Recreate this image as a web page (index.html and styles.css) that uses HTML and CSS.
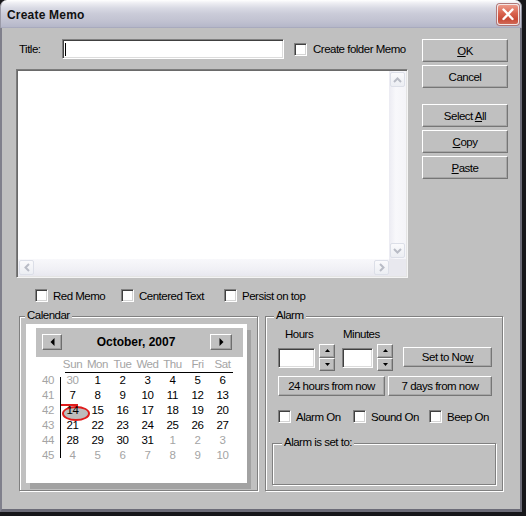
FILE: index.html
```html
<!DOCTYPE html>
<html lang="en">
<head>
    <meta charset="UTF-8">
    <title>Create Memo</title>
    <link rel="stylesheet" href="styles.css">
</head>
<body>
    <div class="window">
        <div class="titlebar">
            <span class="caption">Create Memo</span>
            <div class="close">
                <svg width="20" height="19" viewBox="0 0 20 19"><path d="M5.5 4.5 L14.5 14 M14.5 4.5 L5.5 14" stroke="#fff" stroke-width="2.4" stroke-linecap="round"/></svg>
            </div>
        </div>

        <div class="client">
            <div class="top">
                <div class="left">
                    <div class="title-row">
                        <span class="title-label">Title:</span>
                        <div class="field title-field"><span class="caret"></span></div>
                        <div class="check folder-check"><span class="box"></span>Create folder Memo</div>
                    </div>

                    <div class="memo">
                        <div class="memo-text"></div>
                        <div class="vscroll">
                            <div class="sb-btn"><svg width="9" height="6" viewBox="0 0 9 6"><path d="M1 5 L4.5 1.5 L8 5" fill="none" stroke="#b9bcc6" stroke-width="2"/></svg></div>
                            <div class="sb-btn"><svg width="9" height="6" viewBox="0 0 9 6"><path d="M1 1 L4.5 4.5 L8 1" fill="none" stroke="#b9bcc6" stroke-width="2"/></svg></div>
                        </div>
                        <div class="hscroll">
                            <div class="sb-btn"><svg width="6" height="9" viewBox="0 0 6 9"><path d="M5 1 L1.5 4.5 L5 8" fill="none" stroke="#b9bcc6" stroke-width="2"/></svg></div>
                            <div class="sb-btn"><svg width="6" height="9" viewBox="0 0 6 9"><path d="M1 1 L4.5 4.5 L1 8" fill="none" stroke="#b9bcc6" stroke-width="2"/></svg></div>
                        </div>
                        <div class="corner"></div>
                    </div>
                </div>

                <div class="buttons">
                    <div class="btn"><span><u>O</u>K</span></div>
                    <div class="btn"><span>Cancel</span></div>
                    <div class="btn spaced"><span>Select <u>A</u>ll</span></div>
                    <div class="btn"><span><u>C</u>opy</span></div>
                    <div class="btn"><span><u>P</u>aste</span></div>
                </div>
            </div>

            <div class="options">
                <div class="check"><span class="box"></span>Red Memo</div>
                <div class="check"><span class="box"></span>Centered Text</div>
                <div class="check"><span class="box"></span>Persist on top</div>
            </div>

            <div class="groups">
                <div class="group calendar-group">
                    <span class="group-label">Calendar</span>
                    <div class="calendar">
                        <div class="cal-head">
                            <div class="nav"><svg width="5" height="8" viewBox="0 0 5 8"><path d="M4.5 0 L0.5 4 L4.5 8 Z" fill="#000"/></svg></div>
                            <span class="month">October, 2007</span>
                            <div class="nav nav-next"><svg width="5" height="8" viewBox="0 0 5 8"><path d="M0.5 0 L4.5 4 L0.5 8 Z" fill="#000"/></svg></div>
                        </div>
                        <div class="cal-grid">
                            <span></span>
                            <span class="dname">Sun</span><span class="dname">Mon</span><span class="dname">Tue</span><span class="dname">Wed</span><span class="dname">Thu</span><span class="dname">Fri</span><span class="dname">Sat</span>
                            <span class="rule"></span>

                            <span class="wk">40</span>
                            <span class="day other">30</span><span class="day">1</span><span class="day">2</span><span class="day">3</span><span class="day">4</span><span class="day">5</span><span class="day">6</span>
                            <span class="wk">41</span>
                            <span class="day">7</span><span class="day">8</span><span class="day">9</span><span class="day">10</span><span class="day">11</span><span class="day">12</span><span class="day">13</span>
                            <span class="wk">42</span>
                            <span class="day sel">14</span><span class="day">15</span><span class="day">16</span><span class="day">17</span><span class="day">18</span><span class="day">19</span><span class="day">20</span>
                            <span class="wk">43</span>
                            <span class="day">21</span><span class="day">22</span><span class="day">23</span><span class="day">24</span><span class="day">25</span><span class="day">26</span><span class="day">27</span>
                            <span class="wk">44</span>
                            <span class="day">28</span><span class="day">29</span><span class="day">30</span><span class="day">31</span><span class="day other">1</span><span class="day other">2</span><span class="day other">3</span>
                            <span class="wk">45</span>
                            <span class="day other">4</span><span class="day other">5</span><span class="day other">6</span><span class="day other">7</span><span class="day other">8</span><span class="day other">9</span><span class="day other">10</span>
                        </div>
                    </div>
                </div>

                <div class="group alarm-group">
                    <span class="group-label">Alarm</span>
                    <div class="alarm-top">
                        <div class="spin-field hours">
                            <span class="spin-label">Hours</span>
                            <div class="spin-row">
                                <div class="field num"></div>
                                <div class="spinner">
                                    <div class="spin-btn"><svg width="5" height="3" viewBox="0 0 5 3"><path d="M0 3 L2.5 0 L5 3 Z" fill="#000"/></svg></div>
                                    <div class="spin-btn"><svg width="5" height="3" viewBox="0 0 5 3"><path d="M0 0 L2.5 3 L5 0 Z" fill="#000"/></svg></div>
                                </div>
                            </div>
                        </div>
                        <div class="spin-field minutes">
                            <span class="spin-label">Minutes</span>
                            <div class="spin-row">
                                <div class="field num"></div>
                                <div class="spinner">
                                    <div class="spin-btn"><svg width="5" height="3" viewBox="0 0 5 3"><path d="M0 3 L2.5 0 L5 3 Z" fill="#000"/></svg></div>
                                    <div class="spin-btn"><svg width="5" height="3" viewBox="0 0 5 3"><path d="M0 0 L2.5 3 L5 0 Z" fill="#000"/></svg></div>
                                </div>
                            </div>
                        </div>
                        <div class="btn small now-btn"><span>Set to No<u>w</u></span></div>
                    </div>
                    <div class="alarm-quick">
                        <div class="btn small day-btn"><span>24 hours from now</span></div>
                        <div class="btn small week-btn"><span>7 days from now</span></div>
                    </div>
                    <div class="alarm-checks">
                        <div class="check"><span class="box"></span>Alarm On</div>
                        <div class="check"><span class="box"></span>Sound On</div>
                        <div class="check"><span class="box"></span>Beep On</div>
                    </div>
                    <div class="group alarm-status">
                        <span class="group-label">Alarm is set to:</span>
                    </div>
                </div>
            </div>
        </div>
    </div>
</body>
</html>
```

FILE: styles.css
```css
* {
    margin: 0;
    padding: 0;
    box-sizing: border-box;
}

html, body {
    background: #17171a;
}

body {
    width: 526px;
    height: 516px;
    overflow: hidden;
    font-family: 'Liberation Sans', Arial, sans-serif;
    font-size: 11.5px;
    letter-spacing: -0.5px;
    color: #000;
}

.window {
    width: 522px;
    height: 512px;
    display: flex;
    flex-direction: column;
    background: #c0c0c0;
    border-radius: 7px 7px 0 0;
    overflow: hidden;
}

/* title bar */
.titlebar {
    height: 28px;
    flex: none;
    display: flex;
    align-items: center;
    justify-content: space-between;
    padding: 0 2px 0 6px;
    background: linear-gradient(#ffffff 0px, #eeeef3 3px, #d9dae4 8px, #cacbd8 14px, #c1c2d1 21px, #b5b7c9 27px, #9c9eb2 28px);
    border-radius: 7px 7px 0 0;
    border-left: 1px solid #9a9aa8;
    border-right: 1px solid #8a8a98;
}

.caption {
    font-size: 12px;
    font-weight: bold;
    letter-spacing: 0.2px;
    color: #111;
    margin-top: 1px;
}

.close {
    width: 22px;
    height: 21px;
    display: flex;
    align-items: center;
    justify-content: center;
    margin-top: 1px;
    border: 1px solid #f4e8e8;
    border-radius: 3px;
    background: linear-gradient(#ec9a8a, #d8624e 45%, #c84a38 75%, #d06a58);
    box-shadow: 0 0 0 1px #b07878;
}

/* client area */
.client {
    flex: 1;
    border-left: 2px solid #80808c;
    border-right: 2px solid #6c6c78;
    border-bottom: 3px solid #6c6c78;
    padding: 11px 0 0 14px;
}

.top {
    display: flex;
    gap: 14px;
    align-items: flex-start;
}

.left {
    width: 392px;
}

.title-row {
    display: flex;
    align-items: center;
    height: 20px;
}

.title-label {
    width: 46px;
    padding-left: 3px;
}

.field {
    background: #fff;
    border: 1px solid;
    border-color: #808080 #fff #fff #808080;
    box-shadow: inset 1px 1px 0 #404040, inset -1px -1px 0 #dcdcdc;
}

.title-field {
    width: 222px;
    height: 20px;
    display: flex;
    align-items: center;
    padding-left: 2px;
}

.caret {
    width: 1px;
    height: 13px;
    background: #000;
}

.check {
    display: flex;
    align-items: center;
    gap: 5px;
    height: 13px;
    white-space: nowrap;
}

.box {
    width: 13px;
    height: 13px;
    flex: none;
    background: #fff;
    border: 1px solid;
    border-color: #808080 #fff #fff #808080;
    box-shadow: inset 1px 1px 0 #404040, inset -1px -1px 0 #d4d4d4;
}

.folder-check {
    margin-left: 10px;
    gap: 6px;
}

/* memo box */
.memo {
    margin-top: 10px;
    width: 392px;
    height: 209px;
    display: grid;
    grid-template-columns: 1fr 17px;
    grid-template-rows: 1fr 17px;
    background: #fff;
    border: 1px solid;
    border-color: #7c7c7c #f4f4f4 #f4f4f4 #7c7c7c;
    box-shadow: inset 1px 1px 0 #6a6a6a, inset -1px -1px 0 #e4e4e4;
    padding: 1px;
}

.vscroll {
    display: flex;
    flex-direction: column;
    justify-content: space-between;
    padding: 1px 0 1px 1px;
    background: linear-gradient(to right, #ebebf2, #f8f8fb 40%, #f4f4f8);
}

.hscroll {
    display: flex;
    justify-content: space-between;
    padding: 1px 0 1px 1px;
    background: linear-gradient(#f8f8fb, #f0f0f5 60%, #e8e8ef);
}

.sb-btn {
    width: 15px;
    height: 15px;
    display: flex;
    align-items: center;
    justify-content: center;
    border: 1px solid #dcdfe8;
    border-radius: 2px;
    background: linear-gradient(#fafafc, #eceef3);
}

.corner {
    background: #e8e8ee;
}

/* right buttons */
.buttons {
    width: 86px;
    display: flex;
    flex-direction: column;
    gap: 3px;
}

.btn {
    height: 23px;
    display: flex;
    align-items: center;
    justify-content: center;
    white-space: nowrap;
    background: #c0c0c0;
    border: 1px solid;
    border-color: #fff #767676 #767676 #fff;
    box-shadow: inset -1px -1px 0 #a6a6a6;
}

.btn.spaced {
    margin-top: 13px;
}

.btn.small {
    height: 20px;
}

/* option checkboxes */
.options {
    display: grid;
    grid-template-columns: 86px 103px auto;
    margin-top: 11px;
    padding-left: 19px;
}

/* group boxes */
.groups {
    display: flex;
    gap: 7px;
    margin-top: 14px;
    padding-left: 3px;
}

.group {
    position: relative;
    border: 1px solid #808080;
    box-shadow: inset 1px 1px 0 #fff, 1px 1px 0 #fff;
}

.group-label {
    position: absolute;
    top: -8px;
    left: 5px;
    padding: 0 2px;
    line-height: 13px;
    background: #c0c0c0;
}

.calendar-group {
    width: 239px;
    height: 175px;
    padding: 7px 0 0 6px;
}

.alarm-group {
    width: 238px;
    height: 175px;
    padding: 10px 6px 0 6px;
}

.alarm-group > .group-label {
    left: 8px;
}

/* calendar */
.calendar {
    width: 221px;
    height: 159px;
    background: #fff;
    padding: 4px 4px 0 10px;
    box-shadow: 4px 6px 0 #a2a2a2;
}

.cal-head {
    height: 29px;
    display: flex;
    justify-content: space-between;
    align-items: flex-start;
    padding: 6px 11px 0 6px;
    background: #c0c0c0;
}

.nav {
    width: 20px;
    height: 16px;
    display: flex;
    align-items: center;
    justify-content: center;
    border: 1px solid;
    border-color: #fff #6e6e6e #6e6e6e #fff;
    box-shadow: inset -1px -1px 0 #a0a0a0;
}

.nav-next {
    width: 22px;
}

.month {
    font-size: 12px;
    font-weight: bold;
    letter-spacing: 0;
    line-height: 16px;
}

.cal-grid {
    position: relative;
    display: grid;
    grid-template-columns: 24px repeat(7, 25px);
    grid-template-rows: 15px 1px repeat(6, 15px);
    line-height: 15px;
    text-align: center;
    font-size: 11.5px;
    letter-spacing: -0.3px;
}

.cal-grid::before {
    content: '';
    position: absolute;
    left: 24px;
    top: 20px;
    width: 1px;
    height: 81px;
    background: #000;
}

.dname {
    color: #a4a4a4;
    letter-spacing: -0.4px;
}

.rule {
    grid-column: 2 / -1;
    margin: 0 2px 0 5px;
    background: #000;
}

.wk {
    color: #a4a4a4;
}

.day.other {
    color: #a4a4a4;
}

.day.sel {
    position: relative;
    z-index: 0;
}

.day.sel::before {
    content: '';
    position: absolute;
    left: 2px;
    top: 3px;
    width: 24px;
    height: 11px;
    border: 2px solid #e01c1c;
    border-radius: 50%;
    background: #bdbdbd;
    z-index: -1;
}

.day.sel::after {
    content: '';
    position: absolute;
    left: 1px;
    top: 1px;
    width: 17px;
    height: 2px;
    background: #e01c1c;
}

/* alarm */
.alarm-top {
    display: flex;
    align-items: flex-end;
    padding-left: 6px;
}

.spin-field {
    display: flex;
    flex-direction: column;
}

.spin-label {
    line-height: 14px;
}

.hours .spin-label {
    padding-left: 7px;
}

.minutes {
    margin-left: 7px;
}

.minutes .spin-label {
    padding-left: 1px;
}

.spin-row {
    display: flex;
    align-items: center;
    gap: 4px;
    margin-top: 3px;
}

.num {
    width: 37px;
    height: 20px;
}

.minutes .num {
    width: 31px;
}

.spinner {
    width: 16px;
    height: 27px;
    display: flex;
    flex-direction: column;
}

.spin-btn {
    flex: 1;
    display: flex;
    align-items: center;
    justify-content: center;
    border: 1px solid;
    border-color: #fff #6e6e6e #6e6e6e #fff;
    box-shadow: inset -1px -1px 0 #a0a0a0;
}

.now-btn {
    width: 89px;
    margin-left: 10px;
    margin-bottom: 4px;
}

.alarm-quick {
    display: flex;
    gap: 3px;
    margin-top: 5px;
    padding-left: 6px;
}

.day-btn {
    width: 107px;
}

.week-btn {
    width: 104px;
}

.alarm-checks {
    display: grid;
    grid-template-columns: 75px 76px auto;
    margin-top: 14px;
    padding-left: 6px;
}

.alarm-status {
    margin-top: 20px;
    height: 42px;
}

.alarm-status > .group-label {
    left: 9px;
}
```
